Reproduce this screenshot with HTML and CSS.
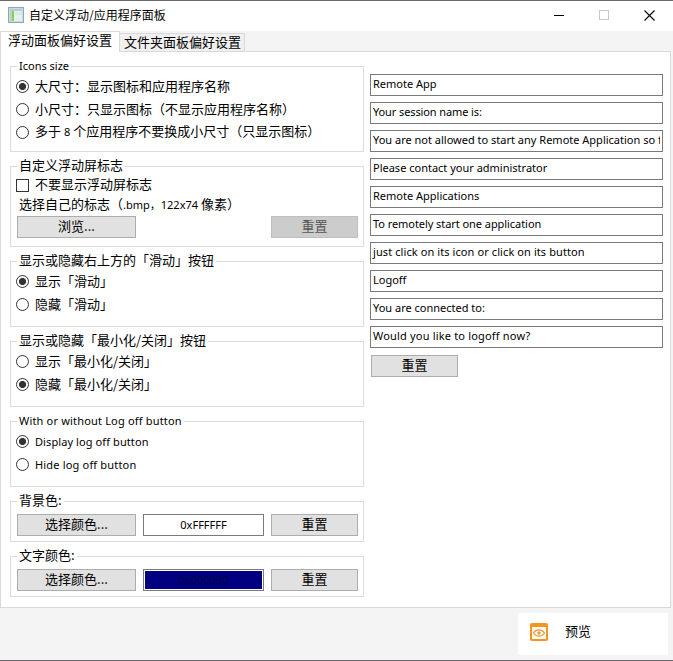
FILE: index.html
```html
<!DOCTYPE html>
<html lang="zh-CN">
<head>
<meta charset="utf-8">
<title>自定义浮动/应用程序面板</title>
<link rel="stylesheet" href="styles.css">
</head>
<body>
<div class="window">
  <header class="titlebar">
    <svg class="app-icon" width="16" height="16" viewBox="0 0 16 16">
      <rect x=".5" y=".5" width="15" height="15" fill="#c7dbe6" stroke="#8aa9bb"/>
      <rect x="2" y="2" width="12" height="2" fill="#b4cbd8"/>
      <rect x="2" y="4" width="12" height="10" fill="#e9efec"/>
      <rect x="2" y="4" width="4" height="10" fill="#8fca68"/>
      <rect x="2" y="4" width="2" height="10" fill="#b6dda0"/>
      <path d="M7 5h7v3H7z" fill="#dce6e4"/>
    </svg>
    <span class="title">自定义浮动/应用程序面板</span>
    <div class="controls">
      <svg width="11" height="11" viewBox="0 0 11 11"><path d="M0 5.5h10" stroke="#000"/></svg>
      <svg width="11" height="11" viewBox="0 0 11 11"><rect x=".5" y=".5" width="9" height="9" fill="none" stroke="#c8c8c8"/></svg>
      <svg width="11" height="11" viewBox="0 0 11 11"><path d="M.5.5l10 10M10.500.5l-10 10" stroke="#000" stroke-width="1.1"/></svg>
    </div>
  </header>
  <nav class="tabs">
    <div class="tab active">浮动面板偏好设置</div>
    <div class="tab">文件夹面板偏好设置</div>
  </nav>
  <main class="page">
    <section class="left">
      <div class="group g-icons">
        <div class="legend en">Icons size</div>
        <label class="row"><i class="radio on"></i><span>大尺寸：显示图标和应用程序名称</span></label>
        <label class="row"><i class="radio"></i><span>小尺寸：只显示图标（不显示应用程序名称）</span></label>
        <label class="row"><i class="radio"></i><span>多于 <span class="en">8</span> 个应用程序不要换成小尺寸（只显示图标）</span></label>
      </div>
      <div class="group g-logo">
        <div class="legend">自定义浮动屏标志</div>
        <label class="row check-row"><i class="check"></i><span>不要显示浮动屏标志</span></label>
        <div class="hint">选择自己的标志（<span class="en">.bmp，122x74</span> 像素）</div>
        <div class="buttons"><div class="btn wide">浏览...</div><div class="btn disabled">重置</div></div>
      </div>
      <div class="group g-pair">
        <div class="legend">显示或隐藏右上方的「滑动」按钮</div>
        <label class="row"><i class="radio on"></i><span>显示「滑动」</span></label>
        <label class="row"><i class="radio"></i><span>隐藏「滑动」</span></label>
      </div>
      <div class="group g-pair">
        <div class="legend">显示或隐藏「最小化/关闭」按钮</div>
        <label class="row"><i class="radio"></i><span>显示「最小化/关闭」</span></label>
        <label class="row"><i class="radio on"></i><span>隐藏「最小化/关闭」</span></label>
      </div>
      <div class="group g-pair">
        <div class="legend en loose">With or without Log off button</div>
        <label class="row"><i class="radio on"></i><span class="en wide-text">Display log off button</span></label>
        <label class="row"><i class="radio"></i><span class="en loose">Hide log off button</span></label>
      </div>
      <div class="group g-color">
        <div class="legend">背景色:</div>
        <div class="buttons"><div class="btn wide">选择颜色...</div><div class="swatch en">0xFFFFFF</div><div class="btn">重置</div></div>
      </div>
      <div class="group g-color">
        <div class="legend">文字颜色:</div>
        <div class="buttons"><div class="btn wide">选择颜色...</div><div class="swatch navy en">0x000080</div><div class="btn">重置</div></div>
      </div>
    </section>
    <section class="right en">
      <div class="field">Remote App</div>
      <div class="field tight">Your session name is:</div>
      <div class="field"><span class="clip">You are not allowed to start any Remote Application so far.</span></div>
      <div class="field">Please contact your administrator</div>
      <div class="field">Remote Applications</div>
      <div class="field snug">To remotely start one application</div>
      <div class="field wide-text">just click on its icon or click on its button</div>
      <div class="field">Logoff</div>
      <div class="field">You are connected to:</div>
      <div class="field loose">Would you like to logoff now?</div>
      <div class="btn">重置</div>
    </section>
  </main>
  <footer class="footer">
    <div class="preview">
      <svg width="18" height="18" viewBox="0 0 18 18">
        <rect width="18" height="18" rx="2" fill="#f7941d"/>
        <rect x="2" y="4" width="14" height="12" fill="#fff"/>
        <path d="M3.500 10C6 5.800 12 5.800 14.500 10C12 14.200 6 14.200 3.500 10z" fill="none" stroke="#f19a35" stroke-width="1.300"/>
        <circle cx="9" cy="10" r="1.700" fill="#f19a35"/>
      </svg>
      <span>预览</span>
    </div>
  </footer>
</div>
</body>
</html>
```
FILE: styles.css
```css
* { box-sizing: border-box; }
body {
  margin: 0;
  font: 400 13px/18px "Noto Sans CJK SC", sans-serif;
  color: #000;
  background: #f4f4f4;
}
.window {
  width: 673px;
  height: 661px;
  display: flex;
  flex-direction: column;
  border-top: 1px solid #6b696b;
  border-bottom: 1px solid #6b696b;
  overflow: hidden;
  white-space: nowrap;
}
.en { font-family: "Noto Sans", "Noto Sans CJK SC", sans-serif; font-size: 11px; font-weight: 400; }
.tight { letter-spacing: -0.11px; }
.snug { letter-spacing: -0.06px; }
.wide-text { letter-spacing: 0.09px; }
.loose { letter-spacing: 0.18px; }

.titlebar {
  height: 30px;
  flex: none;
  display: flex;
  align-items: center;
  padding: 0 17px 0 8px;
  background: #fff;
  font-size: 12px;
}
.app-icon { margin-right: 5px; margin-top: -2px; }
.title { margin-top: -2px; }
.controls { margin: -1px 1px 0 auto; display: flex; gap: 34px; }

.tabs { height: 20px; flex: none; display: flex; align-items: flex-end; }
.tab {
  height: 18px;
  width: 125px;
  padding-left: 4px;
  line-height: 15px;
  background: #f0f0f0;
  border: 1px solid #d9d9d9;
  border-width: 1px 1px 0 0;
}
.tab.active {
  position: relative;
  z-index: 1;
  width: 120px;
  height: 21px;
  margin-bottom: -1px;
  padding-left: 7px;
  background: #fff;
  border-width: 1px 1px 0 1px;
}

.page {
  width: 671px;
  height: 557px;
  flex: none;
  display: flex;
  gap: 6px;
  padding: 14px 0 0 9px;
  background: #fff;
  border: 1px solid #d9d9d9;
}
.left { width: 354px; display: flex; flex-direction: column; gap: 14px; }
.group { position: relative; border: 1px solid #dcdcdc; padding: 8px 5px 0; }
.g-icons { height: 86px; }
.g-logo { height: 81px; }
.g-pair { height: 66px; }
.g-color { height: 41px; padding: 12px 6px 0; }
.legend {
  position: absolute;
  left: 6px;
  top: -11px;
  height: 18px;
  padding: 0 2px;
  background: #fff;
}
.legend.en { top: -10px; }
.row { height: 23px; display: flex; align-items: center; gap: 6px; }
.row > span { margin-top: -2px; }
.row > .en { margin-top: 0; }
.radio {
  width: 13px;
  height: 13px;
  border: 1px solid #333;
  border-radius: 50%;
  background: #fff;
}
.radio.on { background: radial-gradient(circle, #333 3.2px, #fff 3.900px); }
.check { width: 13px; height: 13px; border: 1px solid #333; }
.check-row { height: 20px; }
.hint { height: 18px; margin: 0 0 3px 3px; line-height: 17px; }
.g-logo .buttons { padding: 0 0 0 1px; }
.buttons { display: flex; gap: 7px; }
.btn {
  flex: none;
  width: 87px;
  height: 22px;
  text-align: center;
  font: 400 13px/17px "Noto Sans CJK SC", sans-serif;
  background: #e1e1e1;
  border: 1px solid #adadad;
}
.btn.wide { width: 119px; }
.btn.disabled { margin-left: 128px; background: #ccc; border-color: #bfbfbf; color: #555; }
.swatch {
  flex: none;
  width: 121px;
  height: 22px;
  text-align: center;
  line-height: 17px;
  border: 1px solid #7a7a7a;
  padding: 1px;
  background: #fff;
}
.navy { background: #000080 content-box; color: #000048; }

.right { width: 293px; padding-top: 8px; display: flex; flex-direction: column; gap: 6px; }
.field {
  height: 22px;
  padding: 0 2px;
  line-height: 18px;
  border: 1px solid #7a7a7a;
}
.clip { display: block; overflow: hidden; }
.right .btn { margin: 1px 0 0 1px; }

.footer { flex: 1; display: flex; justify-content: flex-end; padding: 5px 5px 0 0; }
.preview {
  width: 150px;
  height: 42px;
  display: flex;
  align-items: center;
  gap: 17px;
  padding: 0 0 5px 12px;
  background: #fff;
}
.preview span { margin-top: -2px; }
```
